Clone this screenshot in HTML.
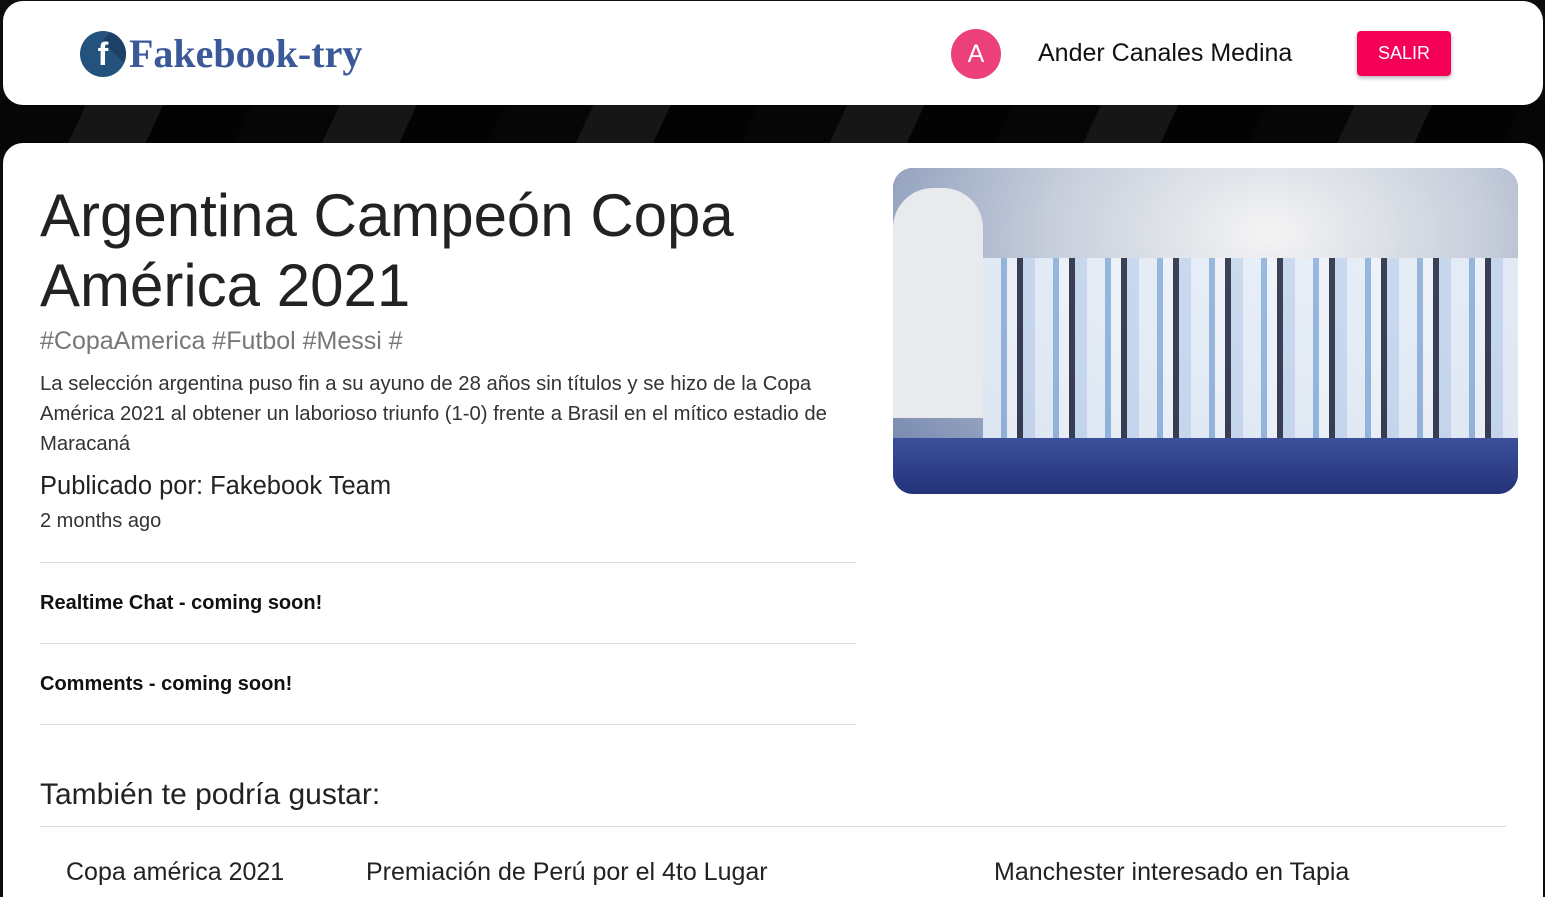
<!DOCTYPE html>
<html><head><meta charset="utf-8"><style>
*{margin:0;padding:0;box-sizing:border-box}
html,body{width:1545px;height:897px;overflow:hidden}
body{font-family:"Liberation Sans",Arial,sans-serif;background:#0d0d0d;position:relative}
.bg{position:absolute;left:0;top:100px;width:1545px;height:50px;
background:repeating-linear-gradient(115deg,#060606 0 80px,#161616 80px 150px,#030303 150px 230px);}
.hdr{position:absolute;left:3px;top:1px;width:1540px;height:104px;background:#fff;border-radius:20px}
.logo{position:absolute;left:80px;top:31px;width:46px;height:46px;border-radius:50%;background:#23527c;overflow:hidden}
.logo:after{content:"";position:absolute;left:22px;top:10px;width:40px;height:60px;background:#1d4166;transform:rotate(-45deg);transform-origin:0 0}
.logo span{position:absolute;left:0;width:46px;top:5px;text-align:center;color:#fff;font:bold 32px "Liberation Sans",sans-serif;z-index:1}
.brand{position:absolute;left:129px;top:30px;font:bold 40px "Liberation Serif",serif;color:#3b5998}
.av{position:absolute;left:951px;top:29px;width:50px;height:50px;border-radius:50%;background:#ec407a;color:#fff;font-size:25px;text-align:center;line-height:50px}
.name{position:absolute;left:1038px;top:39px;font-size:25px;color:#111}
.btn{position:absolute;left:1357px;top:31px;width:94px;height:45px;background:#f50057;border-radius:4px;color:#fff;font-size:18px;text-align:center;line-height:45px;box-shadow:0 2px 4px rgba(0,0,0,.3)}
.main{position:absolute;left:3px;top:143px;width:1540px;height:754px;background:#fff;border-radius:20px 20px 0 0}
.t{position:absolute;color:#222;white-space:nowrap}
.img{position:absolute;left:893px;top:168px;width:625px;height:326px;border-radius:20px;overflow:hidden;background:#2a3b80}
.hr{position:absolute;left:40px;width:816px;height:1px;background:#ddd}
</style></head><body>
<div class="bg"></div>
<div class="hdr"></div>
<div class="logo"><span>f</span></div>
<div class="brand">Fakebook-try</div>
<div class="av">A</div>
<div class="name">Ander Canales Medina</div>
<div class="btn">SALIR</div>
<div class="main"></div>
<div class="t" style="left:40px;top:181px;font-size:60px;line-height:70px;width:820px;white-space:normal">Argentina Campeón Copa América 2021</div>
<div class="t" style="left:40px;top:327px;font-size:25px;color:#777">#CopaAmerica #Futbol #Messi #</div>
<div class="t" style="left:40px;top:369px;font-size:20.3px;line-height:30px;width:818px;color:#333;white-space:normal">La selección argentina puso fin a su ayuno de 28 años sin títulos y se hizo de la Copa América 2021 al obtener un laborioso triunfo (1-0) frente a Brasil en el mítico estadio de Maracaná</div>
<div class="t" style="left:40px;top:472px;font-size:25.5px">Publicado por: Fakebook Team</div>
<div class="t" style="left:40px;top:510px;font-size:20px;color:#333">2 months ago</div>
<div class="hr" style="top:562px"></div>
<div class="t" style="left:40px;top:592px;font-size:20px;font-weight:bold;color:#111">Realtime Chat - coming soon!</div>
<div class="hr" style="top:643px"></div>
<div class="t" style="left:40px;top:673px;font-size:20px;font-weight:bold;color:#111">Comments - coming soon!</div>
<div class="hr" style="top:724px"></div>
<div class="t" style="left:40px;top:778px;font-size:30px">También te podría gustar:</div>
<div class="hr" style="top:826px;width:1466px"></div>
<div class="t" style="left:66px;top:858px;font-size:25px">Copa américa 2021</div>
<div class="t" style="left:366px;top:858px;font-size:25px">Premiación de Perú por el 4to Lugar</div>
<div class="t" style="left:994px;top:858px;font-size:25px">Manchester interesado en Tapia</div>
<div class="img">
<div style="position:absolute;left:0;top:0;width:625px;height:326px;background:radial-gradient(ellipse at 60% 20%,#f4f4f4 0,#c8cfdc 40%,#6a7ea8 100%)"></div>
<div style="position:absolute;left:0;top:20px;width:90px;height:230px;background:#e8eaee;border-radius:40px 40px 0 0"></div>
<div style="position:absolute;left:90px;top:90px;width:535px;height:200px;background:repeating-linear-gradient(90deg,#e6eef8 0 18px,#8fb2dc 18px 24px,#f0f4fa 24px 34px,#2a2f45 34px 40px,#c6d8ef 40px 52px);opacity:.9"></div>
<div style="position:absolute;left:0;top:270px;width:625px;height:56px;background:linear-gradient(180deg,#3b4f9a,#24337a)"></div>
</div>
</body></html>
